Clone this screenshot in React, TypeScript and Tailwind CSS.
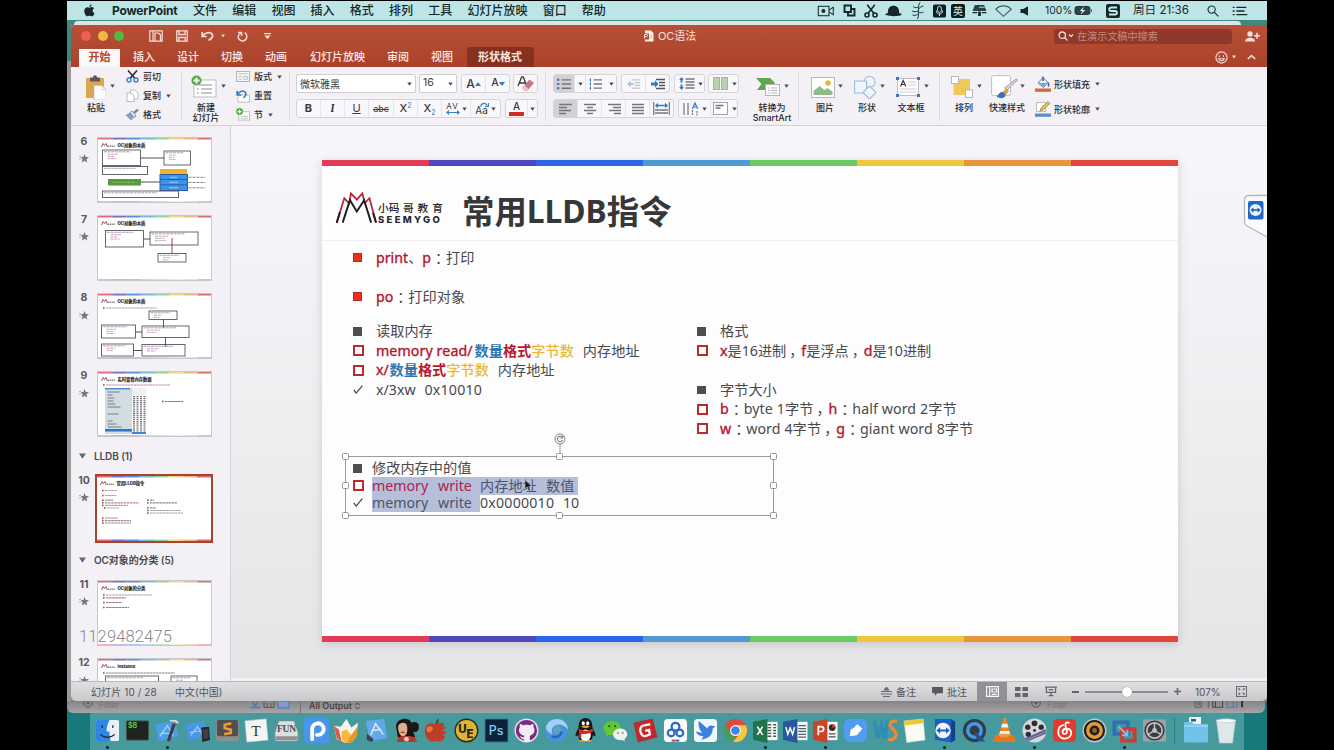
import React from "react";
import type { ReactNode } from "react";

/* ---------- small shared pieces ---------- */

function Arrow({ className = "" }: { className?: string }) {
  return (
    <svg viewBox="0 0 5 4" className={`h-1 w-[5px] shrink-0 ${className}`}>
      <path d="M0.3 0.4h4.4L2.5 3.8z" fill="#4c4a4e" />
    </svg>
  );
}

function Divider() {
  return <div className="h-[50px] w-px shrink-0 bg-[#dcdadd]" />;
}

/* ---------- menu bar ---------- */

const MENUS = ["文件", "编辑", "视图", "插入", "格式", "排列", "工具", "幻灯片放映", "窗口", "帮助"];

function MenuBar() {
  return (
    <div className="relative h-[19px] w-[1200px] shrink-0 bg-[#bde5e7] text-[12px] leading-none text-[#16282b]">
      <div className="flex h-full items-center pl-[17px]">
        <svg viewBox="0 0 12 14" className="h-[13px] w-[11px]">
          <path
            fill="#16282b"
            d="M8.3.3C8.4 1.600 7.300 3.200 5.900 3.200 5.700 1.900 7 .5 8.300.3zM6 3.900C6.700 3.900 7.500 3.200 8.700 3.300 9.800 3.400 10.600 3.900 11.100 4.600 8.700 6.100 9.100 9 11.500 9.900 10.900 11.500 9.900 13.400 8.600 13.400 7.600 13.400 7.300 12.800 6.100 12.800 4.900 12.800 4.500 13.400 3.600 13.400 2.100 13.400.3 10.300.3 7.600.3 4.900 2 3.400 3.700 3.400 4.700 3.400 5.400 3.900 6 3.900z"
          />
        </svg>
        <div className="ml-[17px] w-[81px] text-[12px] font-bold tracking-[-0.180px]">PowerPoint</div>
        <div className="flex gap-[15.2px]">
          {MENUS.map((m) => (
            <div key={m} className="whitespace-nowrap font-medium">
              {m}
            </div>
          ))}
        </div>
        <svg viewBox="0 0 20 14" className="ml-auto h-[12px] w-[18px]">
          <g fill="none" stroke="#16282b" strokeWidth="1.2">
            <rect x="1" y="1.500" width="12.500" height="11" />
            <path d="M13.500 6 18.500 2.500v9L13.500 8" />
          </g>
          <circle cx="7" cy="7" r="2.300" fill="#16282b" />
        </svg>
        <svg viewBox="0 0 13 13" className="ml-[8px] h-[13px] w-[13px]">
          <g fill="none" stroke="#16282b" strokeWidth="1.900">
            <path d="M1.500 1.500h6.500v6.500h-6.500z" />
            <path d="M5 8v3.500h6.500V5H8" />
          </g>
        </svg>
        <svg viewBox="0 0 14 14" className="ml-[8px] h-[14px] w-[14px]">
          <g fill="none" stroke="#16282b" strokeWidth="1.600">
            <circle cx="3" cy="11" r="2" />
            <circle cx="11" cy="11" r="2" />
            <path d="M4 9.500 10.800.8M10 9.500 3.200.8" />
          </g>
        </svg>
        <svg viewBox="0 0 18 12" className="ml-[7px] h-[12px] w-[17px]">
          <path d="M3 8C3 3 5 .5 9 .5S15 3 15 8l2.700 1.300C18 11 14 11.500 9 11.500S0 11 .3 9.300z" fill="#16282b" />
        </svg>
        <svg viewBox="0 0 14 18" className="ml-[9px] h-[18px] w-[14px]">
          <path
            d="M9 .5C7 3 8 5 7.500 8c0 4 .5 6-1 9M2 4.500c2 1.500 4 1.500 5.500.5M12.500 4c-2 .3-3.500 1.200-5 3M12.500 10c-2 1-3.500 1-5 0M1 9c2 .8 4 .8 6 .3M1.500 13c2 .8 4 .3 5.500-1"
            fill="none"
            stroke="#16282b"
            strokeWidth=".9"
          />
        </svg>
        <svg viewBox="0 0 14 14" className="ml-[8px] h-[14px] w-[13px]">
          <rect width="14" height="14" rx="2" fill="#0e1d20" />
          <rect x="5" y="2" width="4" height="6.500" rx="2" fill="none" stroke="#c9eeef" />
          <path d="M3.500 6.500c0 5 7 5 7 0M7 10v2.500" fill="none" stroke="#c9eeef" />
        </svg>
        <div className="ml-[5px] flex h-[14px] w-[14px] items-center justify-center rounded-[2px] bg-[#0e1d20] text-[10px] text-[#c9eeef]">
          英
        </div>
        <svg viewBox="0 0 15 14" className="ml-[7px] h-[13px] w-[15px]">
          <path d="M2.500 1h10L15 7.500H0z" fill="#2c4247" />
          <path d="M0 8.500h5v1.500H0zM10 8.500h5v1.500h-5zM6 8h3v5H6z" fill="#16282b" />
          <path d="M7 3.500h6" stroke="#bde5e7" />
        </svg>
        <svg viewBox="0 0 17 12" className="ml-[8px] h-[12px] w-[17px]">
          <path d="M.8 4.200C5-.2 12-.2 16.200 4.200L8.500 11.300z" fill="none" stroke="#3d5a5e" strokeWidth="1.100" />
        </svg>
        <svg viewBox="0 0 9 10" className="ml-[8px] h-[10px] w-[9px]">
          <path d="M.5 3h2.700L8 .3v9.400L3.200 7H.5z" fill="#16282b" />
        </svg>
        <div className="ml-[16px] w-[29px] text-[10.300px]">100%</div>
        <svg viewBox="0 0 20 10" className="h-[9px] w-[19px]">
          <rect x=".6" y=".6" width="16.500" height="8.800" rx="2" fill="#2b474b" stroke="#16282b" />
          <path d="M18.300 3v4c1.200-.4 1.200-3.600 0-4z" fill="#16282b" />
          <path d="M10.500.5 6 5.500h2.500L7 9.500l5-5H9z" fill="#d8f4f4" />
        </svg>
        <svg viewBox="0 0 14 14" className="ml-[13px] h-[14px] w-[14px]">
          <rect width="14" height="14" rx="2" fill="#16282b" />
          <path d="M11 3.500H5.500C2.500 3.500 2.500 7 5 7h4c2.500 0 2.500 3.500 0 3.500H3" fill="none" stroke="#c9eeef" strokeWidth="1.800" />
        </svg>
        <div className="ml-[13px] w-[59px] whitespace-nowrap text-[11.600px]">周日 21:36</div>
        <svg viewBox="0 0 13 13" className="ml-[15px] h-[12px] w-[12px]">
          <circle cx="5" cy="5" r="3.900" fill="none" stroke="#16282b" strokeWidth="1.200" />
          <path d="m8 8 4.300 4.300" stroke="#16282b" strokeWidth="1.400" />
        </svg>
        <svg viewBox="0 0 16 11" className="ml-[13px] mr-[19px] h-[10px] w-[16px]">
          <path d="M0 1.500h2M0 5.500h2M0 9.500h2M4 1.500h11M4 5.500h9M4 9.500h12" stroke="#16282b" strokeWidth="1.500" />
        </svg>
      </div>
    </div>
  );
}

/* ---------- title bar and tabs ---------- */

function TitleBar() {
  return (
    <div className="flex h-[22px] items-center pl-[10px]">
      <div className="flex gap-[6.500px]">
        <div className="h-[10px] w-[10px] rounded-full bg-[#ee5f55]" />
        <div className="h-[10px] w-[10px] rounded-full bg-[#f1b746]" />
        <div className="h-[10px] w-[10px] rounded-full bg-[#52b943]" />
      </div>
      <svg viewBox="0 0 14 12" className="ml-[25px] h-[12px] w-[14px]">
        <g fill="none" stroke="#f6dfd8" strokeWidth="1.200">
          <path d="M.8.8h12.400v10.400H.8zM4 .8v10.400M6 3h3.500l2 2v6H6z" />
        </g>
      </svg>
      <svg viewBox="0 0 12 12" className="ml-[13px] h-[12px] w-[12px]">
        <g fill="none" stroke="#f6dfd8" strokeWidth="1.300">
          <path d="M.8.8h10.400v10.400H.8z" />
          <path d="M3 1v3.500h6V1M2.800 11V7.500h6.400V11" />
        </g>
      </svg>
      <svg viewBox="0 0 13 10" className="ml-[13px] h-[10px] w-[13px]">
        <path d="M1.200 1v4.500h4.500M1.500 5.300C4 1.500 9 .5 11 3c1.600 2.400-.5 5-3.500 6.300" fill="none" stroke="#f6dfd8" strokeWidth="1.700" />
      </svg>
      <svg viewBox="0 0 5 4" className="ml-[7px] h-1 w-[4px]">
        <path d="M0 0h5L2.500 4z" fill="#f6cfa0" />
      </svg>
      <svg viewBox="0 0 12 12" className="ml-[12px] h-[11px] w-[11px]">
        <path d="M1 1.500h4v4M4.500 2C1 3.500.5 7 2.500 9.300c2 2.200 5.500 2 7.200-.3C11.300 6.500 11 4 8.500 1.800" fill="none" stroke="#f6dfd8" strokeWidth="1.600" />
      </svg>
      <svg viewBox="0 0 7 7" className="ml-[16px] h-[7px] w-[7px]">
        <path d="M0 .6h7" stroke="#f6dfd8" strokeWidth="1.200" />
        <path d="M.3 2.500h6.400L3.500 6.300z" fill="#f6dfd8" />
      </svg>
      <div className="ml-[372px] flex items-center">
        <svg viewBox="0 0 11 12" className="h-[12px] w-[11px]">
          <path d="M2 .5h6l2.500 2.500v8.500H2z" fill="#f6ece8" />
          <path d="M0 3.500h6v6H0z" fill="#b5492f" />
          <path d="M1.500 8.500v-4h2c1.500 0 1.500 2.200 0 2.200h-2" fill="none" stroke="#f6ece8" />
          <path d="M6.500 5.500h2.500M6.500 7.500h2.500" stroke="#c8a79e" strokeWidth=".8" />
        </svg>
        <div className="ml-[4px] pt-px text-[11px] leading-none tracking-[-0.100px] text-[#f6e2dc]">OC语法</div>
      </div>
      <div className="ml-auto flex h-[15px] w-[178px] items-center rounded-[3px] bg-[#90392a] pl-[4px]">
        <svg viewBox="0 0 16 10" className="h-[10px] w-[16px]">
          <circle cx="4.300" cy="4.200" r="3.200" fill="none" stroke="#f0d5cd" strokeWidth="1.300" />
          <path d="m6.500 6.500 3 3M11 3.500l2 2 2-2" fill="none" stroke="#f0d5cd" strokeWidth="1.300" />
        </svg>
        <div className="ml-[3px] whitespace-nowrap text-[10.100px] leading-none text-[#c98a7c]">在演示文稿中搜索</div>
      </div>
      <svg viewBox="0 0 15 11" className="ml-[13px] mr-[7px] h-[11px] w-[15px]">
        <circle cx="5" cy="3" r="2.700" fill="#f6dfd8" />
        <path d="M0 10.500c0-5 10-5 10 0z" fill="#f6dfd8" />
        <path d="M9 4.800h6M12 1.800v6" stroke="#f6dfd8" strokeWidth="1.500" />
      </svg>
    </div>
  );
}

function Tabs() {
  return (
    <div className="flex h-[20px] items-center text-[11px] font-medium leading-none text-[#fbe9e4]">
      <div className="ml-[8px] flex h-[18px] w-[41px] items-center justify-center self-end bg-[#fbf8f9] pb-px font-bold text-[#b7472a]">
        开始
      </div>
      <div className="ml-[13px] w-[44px]">插入</div>
      <div className="w-[44px]">设计</div>
      <div className="w-[44px]">切换</div>
      <div className="w-[45px]">动画</div>
      <div className="w-[77px]">幻灯片放映</div>
      <div className="w-[44px]">审阅</div>
      <div className="w-[36px]">视图</div>
      <div className="flex h-[20px] w-[67px] items-center justify-center rounded-t-[3px] bg-[#87301f] pr-px font-bold">形状格式</div>
      <svg viewBox="0 0 14 14" className="ml-auto h-[13px] w-[13px]">
        <circle cx="7" cy="7" r="6" fill="none" stroke="#f6dfd8" strokeWidth="1.200" />
        <path d="M4.800 4.500v2M9.200 4.500v2M3.800 8.300c1.500 3 5 3 6.400 0z" fill="none" stroke="#f6dfd8" strokeWidth="1.100" />
      </svg>
      <svg viewBox="0 0 5 4" className="ml-[4px] h-1 w-[4px]">
        <path d="M0 0h5L2.500 4z" fill="#f6dfd8" />
      </svg>
      <svg viewBox="0 0 9 6" className="ml-[11px] mr-[11px] h-[6px] w-[9px]">
        <path d="m.8 5 3.700-3.500L8.200 5" fill="none" stroke="#f6dfd8" strokeWidth="1.600" />
      </svg>
    </div>
  );
}

/* ---------- ribbon ---------- */

function BigButton({ width, icon, lines }: { width: string; icon: ReactNode; lines: string[] }) {
  return (
    <div className={`flex h-[58px] shrink-0 flex-col items-center pt-[6px] ${width}`}>
      <div className="flex h-[28px] items-center justify-center">{icon}</div>
      <div className="mt-[2px] flex flex-col items-center text-[9px] font-medium leading-[10px] text-[#2b292d]">
        {lines.map((l) => (
          <div key={l} className="whitespace-nowrap">
            {l}
          </div>
        ))}
      </div>
    </div>
  );
}

function BigArrow({ className = "" }: { className?: string }) {
  return (
    <div className={`flex h-[58px] w-[5px] shrink-0 flex-col pt-[17px] ${className}`}>
      <Arrow />
    </div>
  );
}

function SmallRow({ icon, text, arrow = false }: { icon: ReactNode; text: string; arrow?: boolean }) {
  return (
    <div className="flex h-[19px] items-center">
      <div className="flex w-[14px] items-center justify-center">{icon}</div>
      <div className="ml-[4px] whitespace-nowrap text-[9px] font-medium leading-none text-[#2b292d]">{text}</div>
      {arrow && <Arrow className="ml-[5px]" />}
    </div>
  );
}

const BOX = "flex h-[19px] shrink-0 items-center overflow-hidden rounded-[3px] border border-[#d6d4d8] bg-[#f8f7f9]";

function Lines({ d, color = "#77757a", className = "h-[12px] w-[14px]" }: { d: string; color?: string; className?: string }) {
  return (
    <svg viewBox="0 0 14 12" className={className}>
      <path d={d} stroke={color} strokeWidth="1.300" fill="none" />
    </svg>
  );
}

function Cell({ children, w, on = false }: { children: ReactNode; w: string; on?: boolean }) {
  return (
    <div
      className={`flex h-full shrink-0 items-center justify-center border-r border-[#e6e4e8] last:border-r-0 ${w} ${
        on ? "bg-[#d2d0d4]" : ""
      }`}
    >
      {children}
    </div>
  );
}

function FontGroup() {
  return (
    <div className="flex w-[242px] shrink-0 flex-col gap-[6px] pt-[7px] text-[#3a383d]">
      <div className="flex">
        <div className="flex h-[19px] w-[120px] items-center justify-between rounded-[2px] border border-[#cfcdd1] bg-white pl-[3px] pr-[3px] text-[10px] leading-none">
          微软雅黑 <Arrow />
        </div>
        <div className="ml-[3px] flex h-[19px] w-[38px] items-center justify-between rounded-[2px] border border-[#cfcdd1] bg-white pl-[3px] pr-[3px] text-[10.500px] leading-none">
          16 <Arrow />
        </div>
        <div className={`${BOX} ml-[4px] w-[49px]`}>
          <Cell w="w-[24px]">
            <span className="text-[12px] font-medium leading-none">A</span>
            <svg viewBox="0 0 6 4" className="h-1 w-[6px]">
              <path d="M0 4h6L3 0z" fill="#3f78b8" />
            </svg>
          </Cell>
          <Cell w="w-[24px]">
            <span className="text-[10.500px] font-medium leading-none">A</span>
            <svg viewBox="0 0 6 4" className="h-1 w-[6px]">
              <path d="M0 0h6L3 4z" fill="#3f78b8" />
            </svg>
          </Cell>
        </div>
        <div className={`${BOX} ml-[3px] w-[25px] justify-center`}>
          <svg viewBox="0 0 18 16" className="h-[16px] w-[18px]">
            <path d="M1 10 4.700 1h1.600L9 8M2.500 7H8" stroke="#3a383d" strokeWidth="1.300" fill="none" />
            <path d="m5 11.500 7.500-8L17 7l-7 8H7.500z" fill="#c87588" />
            <path d="m5 11.500 2.300-2.400 4.200 4L10 15H7.500z" fill="#e9c3cc" />
          </svg>
        </div>
      </div>
      <div className="flex text-[11px] leading-none">
        <div className={`${BOX} w-[205px]`}>
          <Cell w="w-[24px]">
            <b>B</b>
          </Cell>
          <Cell w="w-[24px]">
            <i className="font-serif font-bold">I</i>
          </Cell>
          <Cell w="w-[24px]">
            <span className="underline">U</span>
          </Cell>
          <Cell w="w-[25px]">
            <span className="text-[9px] line-through">abc</span>
          </Cell>
          <Cell w="w-[24px]">
            <span className="font-medium">X</span>
            <span className="mb-[7px] text-[7px] text-[#2f73b9]">2</span>
          </Cell>
          <Cell w="w-[24px]">
            <span className="font-medium">X</span>
            <span className="mt-[7px] text-[7px] text-[#2f73b9]">2</span>
          </Cell>
          <Cell w="w-[29px]">
            <div className="mr-[2px] flex flex-col items-center">
              <span className="text-[8px] leading-[8px] tracking-[1px]">AV</span>
              <svg viewBox="0 0 14 5" className="h-[5px] w-[14px]">
                <path d="M0 2.500 3 0v2h8V0l3 2.500L11 5V3H3v2z" fill="#3a80c6" />
              </svg>
            </div>
            <Arrow />
          </Cell>
          <Cell w="w-[29px]">
            <span className="relative mr-[3px] mt-[2px] text-[10px]">
              Aa
              <svg viewBox="0 0 9 5" className="absolute -top-[3px] left-[5px] h-[5px] w-[9px]">
                <path d="M.5 4.500C1.500 1 5 .5 7 3M8.500 1v3.500H5" fill="none" stroke="#3a80c6" strokeWidth="1.300" />
              </svg>
            </span>
            <Arrow />
          </Cell>
        </div>
        <div className={`${BOX} ml-[4px] w-[33px]`}>
          <Cell w="w-[22px]">
            <div className="flex flex-col items-center">
              <span className="text-[10px] font-medium leading-[11px]">A</span>
              <span className="h-[4px] w-[15px] bg-[#d32a22]" />
            </div>
          </Cell>
          <Arrow className="ml-[2px]" />
        </div>
      </div>
    </div>
  );
}

function ParagraphGroup() {
  return (
    <div className="flex w-[185px] shrink-0 flex-col gap-[6px] pt-[7px]">
      <div className="flex">
        <div className={`${BOX} w-[64px]`}>
          <Cell w="w-[21px]" on>
            <svg viewBox="0 0 16 12" className="h-[12px] w-[15px]">
              <path d="M0 1.500h2.500M0 6h2.500M0 10.500h2.500" stroke="#3a76b8" strokeWidth="2.200" />
              <path d="M5 1.500h10M5 6h10M5 10.500h10" stroke="#77757a" strokeWidth="1.400" />
            </svg>
          </Cell>
          <Cell w="w-[11px]">
            <Arrow />
          </Cell>
          <div className="flex w-[20px] justify-center">
            <svg viewBox="0 0 15 12" className="h-[12px] w-[14px]">
              <path d="M1.500.2v3M1.500 4.500v3M1.500 9v3" stroke="#3a76b8" strokeWidth="1.300" />
              <path d="M5 1.500h9M5 6h9M5 10.500h9" stroke="#77757a" strokeWidth="1.400" />
            </svg>
          </div>
          <Arrow className="ml-[3px]" />
        </div>
        <div className={`${BOX} ml-[4px] w-[49px]`}>
          <Cell w="w-[24px]">
            <svg viewBox="0 0 15 12" className="h-[12px] w-[14px] opacity-40">
              <path d="M5 1.500h9M8 4.500h6M8 7.500h6M5 10.500h9" stroke="#77757a" strokeWidth="1.400" />
              <path d="M0 6 4 2.500V5h3v2H4v2.500z" fill="#2f78cc" />
            </svg>
          </Cell>
          <Cell w="w-[24px]">
            <svg viewBox="0 0 15 12" className="h-[12px] w-[15px]">
              <path d="M5 1.500h9M8 4.500h6M8 7.500h6M5 10.500h9" stroke="#55535a" strokeWidth="1.400" />
              <path d="M7.500 6 4 2.300v2.200H0v3h4v2.200z" fill="#2f78cc" />
            </svg>
          </Cell>
        </div>
        <div className={`${BOX} ml-[4px] w-[31px] pl-[4px]`}>
          <svg viewBox="0 0 16 13" className="h-[13px] w-[16px]">
            <path d="m2.500 0 2.300 3H3.500v2.500h-2V3H.2zM2.500 13l2.300-3H3.500V7.500h-2V10H.2z" fill="#2f78cc" />
            <path d="M6.500 2h9M6.500 5h9M6.500 8h9M6.500 11h9" stroke="#77757a" strokeWidth="1.400" />
          </svg>
          <Arrow className="ml-[3px]" />
        </div>
        <div className={`${BOX} ml-[3px] w-[31px] pl-[4px]`}>
          <svg viewBox="0 0 15 13" className="h-[13px] w-[15px]">
            <rect x=".5" y=".5" width="6" height="12" fill="#b9d3b0" stroke="#9fb89a" />
            <rect x="8.500" y=".5" width="6" height="12" fill="#b9d3b0" stroke="#9fb89a" />
          </svg>
          <Arrow className="ml-[4px]" />
        </div>
      </div>
      <div className="flex">
        <div className={`${BOX} w-[121px]`}>
          <Cell w="w-[24px]" on>
            <Lines d="M0 1.500h13M0 4.500h8M0 7.500h12M0 10.500h7" />
          </Cell>
          <Cell w="w-[24px]">
            <Lines d="M1 1.500h12M4 4.500h6M1 7.500h12M4 10.500h6" />
          </Cell>
          <Cell w="w-[24px]">
            <Lines d="M1 1.500h13M6 4.500h8M2 7.500h12M7 10.500h7" />
          </Cell>
          <Cell w="w-[24px]">
            <Lines d="M1 1.500h12M1 4.500h12M1 7.500h12M1 10.500h12" />
          </Cell>
          <Cell w="w-[23px]">
            <svg viewBox="0 0 17 13" className="h-[13px] w-[17px]">
              <path d="M.7 0v13M16.300 0v13" stroke="#77757a" strokeWidth="1.200" />
              <path d="M2 8h13M2 11h13" stroke="#77757a" strokeWidth="1.300" />
              <path d="m2 3.500 3-2.700v2h7v-2l3 2.700-3 2.700v-2H5v2z" fill="#2f78cc" />
            </svg>
          </Cell>
        </div>
        <div className={`${BOX} ml-[4px] w-[60px]`}>
          <Cell w="w-[32px]">
            <svg viewBox="0 0 17 14" className="h-[14px] w-[17px]">
              <path d="M1 1v12M5 1v12" stroke="#77757a" strokeWidth="1.200" />
              <path d="M9.500 8v5.500M14 9v4.500" stroke="#77757a" strokeWidth="1.200" strokeDasharray="2 .8" />
              <path d="m9.300 7 2.700-6 2.700 6M10.300 5h3.600" stroke="#2f78cc" strokeWidth="1.200" fill="none" />
            </svg>
            <Arrow className="ml-[2px]" />
          </Cell>
          <svg viewBox="0 0 15 13" className="ml-[2px] h-[13px] w-[15px]">
            <rect x=".5" y=".5" width="14" height="12" fill="#fff" stroke="#a3a1a6" />
            <path d="M2.500 3.500h8M2.500 6h5" stroke="#77757a" strokeWidth="1.300" />
          </svg>
          <Arrow className="ml-[4px]" />
        </div>
      </div>
    </div>
  );
}

function Ribbon() {
  return (
    <div className="flex h-[59px] items-start border-b border-[#d3d1d5] bg-[#f3f1f5] pt-0">
      <div className="ml-[11px] flex">
        <BigButton
          width="w-[28px]"
          lines={["粘贴"]}
          icon={
            <svg viewBox="0 0 20 25" className="h-[25px] w-[20px]">
              <rect x="0" y="3" width="18" height="20" rx="1" fill="#dca552" />
              <path d="M4 2.500h3c0-3 4-3 4 0h3v4H4z" fill="#5b5960" />
              <path d="M8 10.500h8l4 4V25H8z" fill="#fff" stroke="#b9b7bc" strokeWidth=".7" />
              <path d="M16 10.500v4h4" fill="none" stroke="#b9b7bc" strokeWidth=".7" />
            </svg>
          }
        />
        <BigArrow />
        <div className="ml-[10px] flex w-[55px] flex-col">
          <SmallRow
            text="剪切"
            icon={
              <svg viewBox="0 0 13 13" className="h-[13px] w-[13px]">
                <path d="m2 .5 7 8M11 .5l-7 8" stroke="#2d2b30" strokeWidth="1.600" />
                <g fill="none" stroke="#3c7fc4" strokeWidth="1.400">
                  <circle cx="3" cy="10" r="2" />
                  <circle cx="10" cy="10" r="2" />
                </g>
              </svg>
            }
          />
          <SmallRow
            text="复制"
            arrow
            icon={
              <svg viewBox="0 0 13 13" className="h-[13px] w-[13px]">
                <g fill="#fff" stroke="#b4b2b7" strokeWidth=".9">
                  <path d="M4.500 1H9l3 3v6H4.500z" />
                  <path d="M1 4h4l3 3v5.500H1z" />
                </g>
              </svg>
            }
          />
          <SmallRow
            text="格式"
            icon={
              <svg viewBox="0 0 14 12" className="h-[12px] w-[14px]">
                <path d="m.5 6 4.500-2.500 4 5L6 11.500z" fill="#7ca3cc" />
                <path d="m5 3.500 2-1.500 4 5-2 1.500z" fill="#e7e6e9" stroke="#77757a" strokeWidth=".7" />
                <path d="M9 4 13 .5" stroke="#8d8b90" strokeWidth="2.500" />
              </svg>
            }
          />
        </div>
        <div className="ml-[1px] pt-[4px]">
          <Divider />
        </div>
      </div>
      <div className="ml-[10px] flex">
        <BigButton
          width="w-[28px]"
          lines={["新建", "幻灯片"]}
          icon={
            <svg viewBox="0 0 26 24" className="mr-[4px] h-[24px] w-[26px]">
              <rect x="3" y="5" width="22" height="17" fill="#fff" stroke="#bebcc1" />
              <path d="M8 10h13M10 14h11M10 18h11" stroke="#c7c5ca" strokeWidth="2" />
              <path d="M6 14h1.500M6 18h1.500" stroke="#a9a7ac" strokeWidth="1.500" />
              <circle cx="5.500" cy="5.500" r="5" fill="#55a946" />
              <path d="M5.500 2.500v6M2.500 5.500h6" stroke="#fff" strokeWidth="1.800" />
            </svg>
          }
        />
        <BigArrow className="ml-px" />
        <div className="ml-[10px] flex w-[53px] flex-col">
          <SmallRow
            text="版式"
            arrow
            icon={
              <svg viewBox="0 0 15 12" className="h-[11px] w-[14px]">
                <rect x=".5" y=".5" width="14" height="11" fill="#f5f4f6" stroke="#b1afb4" />
                <path d="M2.500 3h10M2.500 6h4M2.500 9h4M8.500 6h4v3h-4z" stroke="#c0bec3" fill="none" />
              </svg>
            }
          />
          <SmallRow
            text="重置"
            icon={
              <svg viewBox="0 0 15 14" className="h-[14px] w-[14px]">
                <path d="M4 6h10.500v7.500H2V9z" fill="#fff" stroke="#bebcc1" />
                <path d="M1.200 1.500V6h4.500M1.500 5.500C4 1.500 8 .5 10 3c1.500 2.500 0 4.500-2 6" fill="none" stroke="#3479c0" strokeWidth="1.700" />
              </svg>
            }
          />
          <SmallRow
            text="节"
            arrow
            icon={
              <svg viewBox="0 0 15 14" className="h-[13px] w-[14px]">
                <rect x="3" y="4" width="11.500" height="9" fill="#fff" stroke="#bebcc1" />
                <path d="M5 9h8M5 11h8" stroke="#bebcc1" />
                <circle cx="3.800" cy="3.800" r="3.700" fill="#55a946" />
                <path d="M3.800 1.600V6M1.600 3.800H6" stroke="#fff" strokeWidth="1.300" />
              </svg>
            }
          />
        </div>
        <div className="pt-[4px]">
          <Divider />
        </div>
      </div>
      <div className="ml-[6px] flex">
        <FontGroup />
        <div className="ml-[7px] pt-[4px]">
          <Divider />
        </div>
      </div>
      <div className="ml-[7px] flex">
        <ParagraphGroup />
        <BigButton
          width="ml-[12px] w-[44px]"
          lines={["转换为", "SmartArt"]}
          icon={
            <svg viewBox="0 0 25 20" className="mr-[8px] h-[20px] w-[25px]">
              <path d="M0 1h14l5 5-5 7H1l4.500-6z" fill="#5fa74f" />
              <rect x="9.500" y="7.500" width="14" height="11" fill="#fdfdfd" stroke="#b4b2b7" />
              <path d="M12 11h1.500M15 11h6M12 13.500h1.500M15 13.500h6M12 16h1.500M15 16h6" stroke="#b4b2b7" />
            </svg>
          }
        />
        <BigArrow className="-ml-[10px]" />
        <div className="ml-[9px] pt-[4px]">
          <Divider />
        </div>
      </div>
      <div className="flex">
        <BigButton
          width="ml-[11px] w-[30px]"
          lines={["图片"]}
          icon={
            <svg viewBox="0 0 24 21" className="mr-[4px] h-[21px] w-[24px]">
              <rect x=".5" y=".5" width="23" height="20" fill="#fff" stroke="#b9b7bc" />
              <path d="M2.500 18v-4l6-5 5 4 3-2 5 3.500V18z" fill="#92bb8c" />
              <circle cx="17" cy="6" r="2.700" fill="#e6b93e" />
            </svg>
          }
        />
        <BigArrow className="-ml-[2px]" />
        <BigButton
          width="ml-[9px] w-[30px]"
          lines={["形状"]}
          icon={
            <svg viewBox="0 0 23 23" className="mr-[4px] h-[23px] w-[23px]">
              <g fill="#f0f6fb" stroke="#9dbfdb" strokeWidth="1.100">
                <circle cx="15.500" cy="6" r="5.500" />
                <rect x=".6" y="5" width="12" height="12" />
                <path d="m15.500 10 6.500 6.500-6.500 6.500L9 16.500z" />
              </g>
            </svg>
          }
        />
        <BigArrow className="-ml-[2px]" />
        <BigButton
          width="ml-[9px] w-[34px]"
          lines={["文本框"]}
          icon={
            <svg viewBox="0 0 24 20" className="mr-[6px] h-[20px] w-[24px]">
              <rect x="1.500" y="1.500" width="21" height="17" fill="#fdfdfd" stroke="#bebcc1" />
              <path d="m4.500 9.500 2.700-6 2.700 6M5.500 7.500H9" stroke="#3a383d" strokeWidth="1.200" fill="none" />
              <path d="M12 5h8M12 8h8M4 12h16M4 15h16" stroke="#cfcdd1" />
              <path d="M0 0h3v3H0zM21 0h3v3h-3zM0 17h3v3H0zM21 17h3v3h-3z" fill="#3a78bd" />
            </svg>
          }
        />
        <BigArrow className="-ml-[4px]" />
        <div className="ml-[10px] pt-[4px]">
          <Divider />
        </div>
      </div>
      <div className="flex">
        <BigButton
          width="ml-[9px] w-[30px]"
          lines={["排列"]}
          icon={
            <svg viewBox="0 0 22 22" className="mr-[5px] h-[22px] w-[22px]">
              <rect x="2.500" y="3" width="16.500" height="16" fill="#f0c75a" />
              <rect x=".5" y=".5" width="7" height="7" fill="#fff" stroke="#b9b7bc" />
              <rect x="14.500" y="14" width="7" height="7.500" fill="#fff" stroke="#b9b7bc" />
            </svg>
          }
        />
        <BigArrow className="-ml-[2px]" />
        <BigButton
          width="ml-[6px] w-[38px]"
          lines={["快速样式"]}
          icon={
            <svg viewBox="0 0 28 24" className="mr-[5px] h-[24px] w-[28px]">
              <rect x=".6" y=".6" width="19" height="20" rx="2" fill="#fff" stroke="#bebcc1" />
              <path d="M26.500 5 16 15l-2.500-2L25 4z" fill="#d6d4d8" stroke="#8f8d92" strokeWidth=".8" />
              <path d="m15.500 13.500 2.500 2.500-3 4-5-2z" fill="#dca04a" />
              <path d="M5.500 21c2-.5 2.500-3.500 5-4 2.500 0 5 2.500 3.500 4.500-2 2.500-6.500 2-8.500-.5z" fill="#3670b6" />
            </svg>
          }
        />
        <BigArrow className="-ml-[6px]" />
        <div className="ml-[10px] flex flex-col pt-[7px]">
          <div className="flex h-[20px] items-center">
            <svg viewBox="0 0 16 16" className="h-[16px] w-[16px]">
              <path d="M0 12.500h16v3.300H0z" fill="#d16a3a" />
              <path d="m3 7 5-5.500 5 5-4.500 5z" fill="#e9eef4" stroke="#5e7d9f" />
              <path d="M8 5V.5M12.500 6.500c1.500 1 1.500 3 .5 4" stroke="#2f6aab" strokeWidth="1.500" fill="none" />
              <path d="M3 7h9l-3.500 4z" fill="#7fa6cd" />
            </svg>
            <div className="ml-[3px] w-[41px] whitespace-nowrap text-[9px] font-medium leading-none text-[#2b292d]">形状填充</div>
            <Arrow />
          </div>
          <div className="mt-[5px] flex h-[20px] items-center">
            <svg viewBox="0 0 16 16" className="h-[16px] w-[16px]">
              <path d="M0 12.500h16v3.300H0z" fill="#5b8ec9" />
              <path d="M1.500 1.500h9v9h-9z" fill="#fff" stroke="#bebcc1" />
              <path d="m5 10 1-3 7-6.500 2 2L8 9z" fill="#e8c14c" stroke="#7b6c3e" strokeWidth=".6" />
            </svg>
            <div className="ml-[3px] w-[41px] whitespace-nowrap text-[9px] font-medium leading-none text-[#2b292d]">形状轮廓</div>
            <Arrow />
          </div>
        </div>
      </div>
    </div>
  );
}

/* ---------- slide thumbnails ---------- */

const RAINBOW = ["#dd6f80", "#7c6fbf", "#5c8fe0", "#7db9dd", "#95d694", "#ecdc85", "#ebbb85", "#d4706c"];

function ThumbFrame({ title, children }: { title: string; children?: ReactNode }) {
  return (
    <svg viewBox="0 0 114 65" className="h-[65px] w-[114px]">
      <rect width="114" height="65" fill="#fff" />
      {RAINBOW.map((c, i) => (
        <rect key={c} x={i * 14.25} y="0" width="14.250" height="1.500" fill={c} />
      ))}
      {RAINBOW.map((c, i) => (
        <rect key={c} x={i * 14.25} y="63.500" width="14.250" height="1.500" fill={c} />
      ))}
      <path d="M3.500 9 5 5.500l1.500 2 1.500-2L9.500 9" fill="none" stroke="#7c2430" strokeWidth=".8" />
      <path d="M9.500 8.300h8" stroke="#8d8b90" strokeWidth="1.500" strokeDasharray="1.500 .5" />
      <text x="19.500" y="9" fontSize="4.250" fontWeight="700" fill="#2f2d32" stroke="#2f2d32" strokeWidth=".15">
        {title}
      </text>
      {children}
    </svg>
  );
}

function Frame({ x, y, w, h }: { x: number; y: number; w: number; h: number }) {
  return (
    <g>
      <rect x={x} y={y} width={w} height={h} fill="#fff" stroke="#59575c" strokeWidth=".9" />
      <path d={`M${x + 1.5} ${y + 1.8}h${w * 0.7}`} stroke="#a592b4" strokeWidth=".9" strokeDasharray="3 .7" />
      {h > 8 && (
        <path
          d={`M${x + 5} ${y + 4.2}h${w * 0.28}M${x + 5} ${y + 6.4}h${w * 0.2}${h > 12 ? `M${x + 5} ${y + 8.6}h${w * 0.24}` : ""}`}
          stroke="#c79ab5"
          strokeWidth=".9"
          strokeDasharray="3 .7"
        />
      )}
    </g>
  );
}

function Bullets({ rows }: { rows: [number, number, number, string][] }) {
  return (
    <g>
      {rows.map(([x, y, w, c], i) => (
        <g key={i}>
          <rect x={x} y={y - 0.8} width="1.600" height="1.600" fill="#8d5560" />
          <path d={`M${x + 3} ${y}h${w}`} stroke={c} strokeWidth="1.200" strokeDasharray="2.600 .5" />
        </g>
      ))}
    </g>
  );
}

function Thumb6() {
  return (
    <ThumbFrame title="OC对象的本质">
      <Frame x={4.5} y={12} w={38} h={15.5} />
      <Frame x={66} y={13} w={26.5} h={14} />
      <path d="M42.500 20H66M42.500 44H62" stroke="#3d3b40" strokeWidth=".9" />
      <Frame x={4.5} y={28.5} w={45} h={8} />
      <rect x="10" y="41" width="33" height="6.500" fill="#57993b" />
      <path d="M15 44.300h22" stroke="#8cc070" strokeWidth="1" strokeDasharray="3 .7" />
      <rect x="62" y="31" width="27" height="5" fill="#f0b22d" />
      <rect x="62" y="36.500" width="27.500" height="16" fill="#3c94ea" stroke="#2a5ba0" />
      <path d="M62 41.500h27.500M62 46.800h27.500" stroke="#2a5ba0" strokeWidth=".9" />
      <path d="M72 39.300h7M71 44.300h9M71 49.800h9" stroke="#a9d1f7" strokeWidth=".9" />
      <path d="M90.500 39.300h17M90.500 44.500h17M90.500 49.800h17" stroke="#77757a" strokeWidth=".9" strokeDasharray="3 1" />
      <Frame x={4.5} y={53} w={76} h={6.5} />
    </ThumbFrame>
  );
}

function Thumb7() {
  return (
    <ThumbFrame title="OC对象的本质">
      <Frame x={7.5} y={14.5} w={38} h={16.5} />
      <Frame x={52} y={16} w={48} h={13} />
      <Frame x={60} y={37.5} w={28} h={8.5} />
      <path d="M45.500 23H52" stroke="#3d3b40" strokeWidth=".9" />
      <path d="M74 22v15.500" stroke="#7f3440" strokeWidth=".9" />
    </ThumbFrame>
  );
}

function Thumb8() {
  return (
    <ThumbFrame title="OC对象的本质">
      <Bullets rows={[[5, 14, 51, "#a5a3a8"]]} />
      <Frame x={51} y={17} w={28} h={8.5} />
      <Frame x={3.5} y={31} w={34} h={13} />
      <Frame x={44} y={32} w={47} h={11.5} />
      <Frame x={3.5} y={50} w={32} h={12} />
      <Frame x={44} y={50.5} w={43} h={11.5} />
      <path d="M37.500 38H44M35.500 56.500H44" stroke="#3d3b40" strokeWidth=".9" />
      <path d="M65.500 25.500v8M67.500 43.500v9" stroke="#7f3440" strokeWidth=".9" />
    </ThumbFrame>
  );
}

function Thumb9() {
  return (
    <ThumbFrame title="实时查看内存数据">
      <Bullets
        rows={[
          [5, 13, 64, "#c48b95"],
          [64, 29.5, 18, "#77757a"],
        ]}
      />
      <rect x="7" y="16" width="27" height="46" fill="#d3dde0" />
      <path d="M7 16.700h25" stroke="#4b88cd" strokeWidth="1.500" />
      <path
        d="M9.500 20h12M9.500 23h5M9.500 26h7M9.500 29h6M9.500 32h8M9.500 35h13M9.500 42h11M9.500 49h5M9.500 52h9M9.500 55h14"
        stroke="#69828a"
        strokeWidth="1"
      />
      <rect x="7" y="57" width="27" height="2.500" fill="#2e74ca" />
      <rect x="34" y="16" width="14" height="8" fill="#eef1f2" />
      <path d="M36 24v37M39.500 24v37M43 24v37M46.500 24v37" stroke="#7a787d" strokeWidth="2" strokeDasharray="1.200 .7" />
      <path d="M34 61h14" stroke="#3f83d1" strokeWidth="2" />
    </ThumbFrame>
  );
}

function Thumb10() {
  return (
    <ThumbFrame title="常用LLDB指令">
      <Bullets
        rows={[
          [5, 14.5, 12, "#c99aa2"],
          [5, 19.5, 11, "#a3a1a6"],
          [5, 24.2, 8, "#8d8b90"],
          [5, 26.8, 34, "#b98aa0"],
          [5, 29.4, 23, "#8fa6c9"],
          [7, 32, 12, "#a3a1a6"],
          [50, 24.2, 4, "#8d8b90"],
          [50, 26.8, 27, "#8d8b90"],
          [50, 31.8, 6, "#8d8b90"],
          [50, 34.5, 31, "#a3a1a6"],
          [50, 37, 33, "#a3a1a6"],
          [5, 42, 13, "#8d8b90"],
          [5, 44.6, 26, "#a58a94"],
          [5, 47, 26, "#8d8b90"],
        ]}
      />
    </ThumbFrame>
  );
}

function Thumb11() {
  return (
    <ThumbFrame title="OC对象的分类">
      <Bullets
        rows={[
          [5, 14, 46, "#a3a1a6"],
          [5, 16.8, 20, "#b5818b"],
          [5, 21.5, 16, "#a8707b"],
          [5, 26.5, 23, "#a8707b"],
        ]}
      />
    </ThumbFrame>
  );
}

function Thumb12() {
  return (
    <ThumbFrame title="instance">
      <Bullets rows={[[5, 14, 69, "#8f7f85"]]} />
      <Frame x={7.5} y={17} w={53} h={6} />
      <Frame x={73} y={17} w={26} h={12} />
    </ThumbFrame>
  );
}

function ThumbRow({ n, children, selected = false }: { n: number; children: ReactNode; selected?: boolean }) {
  return (
    <div className="flex h-[78.330px] shrink-0">
      <div className="flex w-[26px] flex-col items-center text-[10.500px] font-bold leading-none text-[#5b595e]">
        <div className="w-[24px] text-center">{n}</div>
        <svg viewBox="0 0 10 9" className="mt-[7px] h-[9px] w-[10px]">
          <path d="m5.500 0 1.200 3 3.300.2-2.600 2 .9 3.300-2.800-1.800L2.800 8.500l.8-3.300L1.500 3.200l2.900-.2z" fill="#77757a" />
          <path d="M0 2.500h2M0 5h2" stroke="#a3a1a6" strokeWidth=".8" />
        </svg>
      </div>
      <div
        className={
          selected
            ? "-mt-[2px] -ml-[2px] h-[69px] w-[118px] overflow-hidden border-2 border-[#a9432e]"
            : "h-[66px] w-[115px] overflow-hidden border-[0.5px] border-[#c9c7cc]"
        }
      >
        {children}
      </div>
    </div>
  );
}

function SectionRow({ title }: { title: string }) {
  return (
    <div className="flex h-[25.800px] shrink-0 items-start pl-[8px] text-[10px] font-semibold leading-[12px] text-[#4d4b50]">
      <svg viewBox="0 0 8 6" className="mt-[3px] h-[6px] w-[7px]">
        <path d="M0 0h8L4 6z" fill="#6a686d" />
      </svg>
      <div className="ml-[8px] whitespace-nowrap tracking-[-0.100px]">{title}</div>
    </div>
  );
}

function ThumbPane() {
  return (
    <div className="relative flex w-[160px] shrink-0 flex-col overflow-hidden border-r border-[#d4d2d6] bg-[#f3f1f6] pt-[10.500px]">
      <ThumbRow n={6}>
        <Thumb6 />
      </ThumbRow>
      <ThumbRow n={7}>
        <Thumb7 />
      </ThumbRow>
      <ThumbRow n={8}>
        <Thumb8 />
      </ThumbRow>
      <ThumbRow n={9}>
        <Thumb9 />
      </ThumbRow>
      <SectionRow title="LLDB (1)" />
      <ThumbRow n={10} selected>
        <Thumb10 />
      </ThumbRow>
      <SectionRow title="OC对象的分类 (5)" />
      <ThumbRow n={11}>
        <Thumb11 />
      </ThumbRow>
      <ThumbRow n={12}>
        <Thumb12 />
      </ThumbRow>
      <div className="absolute left-[8px] top-[503px] font-['Roboto','Liberation_Sans',sans-serif] text-[16.500px] font-light leading-none tracking-[0.150px] text-[#8a888d]">
        1129482475
      </div>
    </div>
  );
}

/* ---------- slide ---------- */

function Stripe() {
  return (
    <div className="flex h-[5.500px] shrink-0">
      <div className="flex-1 bg-[#e33b55]" />
      <div className="flex-1 bg-[#4d49bd]" />
      <div className="flex-1 bg-[#2c66e6]" />
      <div className="flex-1 bg-[#4c9bd4]" />
      <div className="flex-1 bg-[#6bcb63]" />
      <div className="flex-1 bg-[#eec640]" />
      <div className="flex-1 bg-[#e9933b]" />
      <div className="flex-1 bg-[#e1463c]" />
    </div>
  );
}

function Bullet({ kind }: { kind: "red" | "gray" | "hollow" | "check" }) {
  return (
    <div className="flex w-[23px] shrink-0 items-center">
      {kind === "red" && <div className="h-[9px] w-[9px] border border-[#b9281c] bg-[#e8321f]" />}
      {kind === "gray" && <div className="h-[8.500px] w-[9px] bg-[#4e4e4e]" />}
      {kind === "hollow" && <div className="h-[11px] w-[11px] border-[2.500px] border-[#bd2a2e] bg-white" />}
      {kind === "check" && (
        <svg viewBox="0 0 11 10" className="mb-px h-[9px] w-[10px]">
          <path d="M.8 5.500 3.500 9 10.300.8" fill="none" stroke="#4a4a4a" strokeWidth="1.400" />
        </svg>
      )}
    </div>
  );
}

function Line({ kind, children }: { kind: "red" | "gray" | "hollow" | "check"; children: ReactNode }) {
  return (
    <div className="flex h-[19.500px] shrink-0 items-center whitespace-pre">
      <Bullet kind={kind} />
      {children}
    </div>
  );
}

function R({ children, w = "" }: { children: ReactNode; w?: string }) {
  return <span className={`inline-block text-[#b5142c] [-webkit-text-stroke:0.350px_#b5142c] ${w}`}>{children}</span>;
}

function Colon() {
  return <span className="inline-block w-[15px] pl-[0.500px] font-['Noto_Sans_CJK_TC',sans-serif]">：</span>;
}

function Comma() {
  return <span className="inline-block w-[15px] pl-[3px]">，</span>;
}

function Logo() {
  return (
    <div className="flex w-[107px] items-end">
      <svg viewBox="0 0 42 32" className="h-[32px] w-[42px]">
        <path d="M.8 31 8.500 6l5 5.500L15.300 1l6 6.500L27 1l2.500 10L34.300 6 41 31" fill="none" stroke="#b52638" strokeWidth="1.800" />
        <path d="M.8 31 4 20M41 31l-3-10" stroke="#1f1d20" strokeWidth="2" />
        <path d="m6.800 31 7.500-23 7 11.500 7.500-11.500L36 31" fill="none" stroke="#1f1d20" strokeWidth="2" />
      </svg>
      <div className="ml-[1px] flex flex-col text-[#2b292d]">
        <div className="whitespace-nowrap text-[10.700px] font-medium leading-none">
          小码<span className="inline-block pl-[3.500px]">哥</span>
          <span className="inline-block pl-[4px]">教</span>
          <span className="inline-block pl-[4px]">育</span>
        </div>
        <div className="mt-[1px] whitespace-nowrap font-['Inter',sans-serif] text-[9.500px] font-extrabold leading-[9px] tracking-[2.300px]">
          SEEMYGO
        </div>
      </div>
    </div>
  );
}

function Handle({ className }: { className: string }) {
  return <div className={`absolute h-[7px] w-[7px] rounded-[1.500px] border border-[#98969b] bg-white ${className}`} />;
}

function SelectedBox() {
  return (
    <div className="relative ml-[23px] mt-[17.500px] h-[60px] w-[429px] shrink-0 border border-[#9c9a9f] pl-[7px] pt-[2.500px]">
      <div className="flex h-[17.600px] items-center">
        <div className="w-[19px]">
          <Bullet kind="gray" />
        </div>
        修改内存中的值
      </div>
      <div className="flex h-[17.600px] items-center whitespace-pre text-[#4c5567]">
        <div className="w-[19px]">
          <Bullet kind="hollow" />
        </div>
        <div className="flex h-[17.600px] w-[206px] items-center bg-[#b5bfd9]">
          <span className="w-[66px] text-[#b02053]">memory</span>
          <span className="w-[42px] text-[#b02053]">write</span>
          <span className="w-[66px]">内存地址</span>
          <span>数值</span>
        </div>
      </div>
      <div className="flex h-[17.600px] items-center whitespace-pre">
        <div className="w-[19px]">
          <Bullet kind="check" />
        </div>
        <div className="flex h-[16.500px] w-[108px] items-center bg-[#b5bfd9] text-[#4c5567]">
          <span className="w-[66px]">memory</span>
          <span>write</span>
        </div>
        <span className="w-[83px] tracking-[0.200px]">0x0000010</span>
        <span>10</span>
      </div>
      <Handle className="-left-[4px] -top-[4px]" />
      <Handle className="-top-[4px] left-[210px]" />
      <Handle className="-right-[4px] -top-[4px]" />
      <Handle className="-left-[4px] top-[25px]" />
      <Handle className="-right-[4px] top-[25px]" />
      <Handle className="-bottom-[4px] -left-[4px]" />
      <Handle className="-bottom-[4px] left-[210px]" />
      <Handle className="-bottom-[4px] -right-[4px]" />
      <svg viewBox="0 0 12 21" className="absolute -top-[24px] left-[207.500px] h-[21px] w-[12px]">
        <path d="M6 11v10" stroke="#9c9a9f" />
        <circle cx="6" cy="6" r="5" fill="#f2f2f3" stroke="#8b898e" />
        <path d="M8.200 4.300A2.700 2.700 0 1 0 8.600 7M8.700 2.700v2.200H6.500" fill="none" stroke="#6e6c71" />
      </svg>
      <svg viewBox="0 0 10 14" className="absolute left-[178px] top-[22px] h-[13px] w-[9px]">
        <path d="M1 .5v10.500l2.500-2.300 1.700 4.300 2-.8-1.700-4.200H9z" fill="#1b1b22" stroke="#dfe3ee" strokeWidth=".6" />
      </svg>
    </div>
  );
}

function Slide() {
  return (
    <div className="flex h-[481.500px] w-[856px] flex-col bg-[#fdfdfe] font-['Noto_Sans','Noto_Sans_CJK_SC',sans-serif] text-[14.200px] leading-none text-[#4a4a4c] shadow-[0_2px_9px_rgba(90,85,95,0.22)]">
      <Stripe />
      <div className="flex h-[75px] shrink-0 items-start border-b border-[#f0eff1] pl-[14px]">
        <div className="pt-[26.500px]">
          <Logo />
        </div>
        <div className="ml-[19px] flex h-[91px] items-center whitespace-nowrap text-[32.400px] font-bold text-[#373739]">
          常用<span className="text-[31.800px]">LLDB</span>指令
        </div>
      </div>
      <div className="flex shrink-0 flex-col pl-[31px] pt-[7.500px]">
        <Line kind="red">
          <R>print</R>、<R>p</R>
          <Colon />
          打印
        </Line>
        <div className="mb-[15px] mt-[19.500px]">
          <Line kind="red">
            <R>po</R>
            <Colon />
            打印对象
          </Line>
        </div>
        <div className="flex">
          <div className="flex w-[344px] flex-col">
            <Line kind="gray">读取内存</Line>
            <Line kind="hollow">
              <R w="w-[98.500px] tracking-[0.100px]">memory read/</R>
              <span className="font-bold text-[#2f76ad]">数量</span>
              <span className="font-bold text-[#bd1730]">格式</span>
              <span className="w-[51.500px] font-medium text-[#e9b935]">字节数</span>
              内存地址
            </Line>
            <Line kind="hollow">
              <R w="w-[13.500px]">x/</R>
              <span className="font-bold text-[#2f76ad]">数量</span>
              <span className="font-bold text-[#bd1730]">格式</span>
              <span className="w-[51.500px] font-medium text-[#e9b935]">字节数</span>
              内存地址
            </Line>
            <Line kind="check">
              <span className="w-[48.500px]">x/3xw</span>
              <span className="tracking-[0.200px]">0x10010</span>
            </Line>
          </div>
          <div className="flex flex-col">
            <Line kind="gray">格式</Line>
            <Line kind="hollow">
              <R>x</R>是16进制
              <Comma />
              <R>f</R>是浮点
              <Comma />
              <R>d</R>是10进制
            </Line>
            <div className="h-[19.500px]" />
            <Line kind="gray">字节大小</Line>
            <Line kind="hollow">
              <R>b</R>
              <Colon />
              <span className="tracking-[0.100px]">byte 1字节</span>
              <Comma />
              <R>h</R>
              <Colon />
              <span className="tracking-[0.100px]">half word 2字节</span>
            </Line>
            <Line kind="hollow">
              <R>w</R>
              <Colon />
              <span className="tracking-[0.100px]">word 4字节</span>
              <Comma />
              <R>g</R>
              <Colon />
              <span className="tracking-[0.100px]">giant word 8字节</span>
            </Line>
          </div>
        </div>
      </div>
      <SelectedBox />
      <div className="flex-1" />
      <Stripe />
    </div>
  );
}

function Canvas() {
  return (
    <div className="relative flex flex-1 flex-col border-b-[3px] border-[#f3f2f4] bg-linear-to-b from-[#f8f6fa] via-[#efeef1] to-[#e5e4e6] pl-[91px] pt-[34px]">
      <Slide />
      <svg viewBox="0 0 24 46" className="absolute right-0 top-[68px] h-[46px] w-[24px]">
        <path d="M24 1.500H6c-3 0-4.500 1.500-4.500 4.500v22c0 2 1 3 2.500 4L24 43" fill="#fbfafc" stroke="#b9b7bc" strokeWidth="1.300" />
        <rect x="5" y="7" width="15.500" height="18.500" rx="2" fill="#2467c4" />
        <circle cx="12.500" cy="16" r="6" fill="#e9f1fb" />
        <path d="m7.500 16 3-2.500v1.700h4v-1.700l3 2.500-3 2.500v-1.700h-4v1.700z" fill="#1d59b3" />
      </svg>
    </div>
  );
}

/* ---------- status bar ---------- */

function StatusBar() {
  return (
    <div className="flex h-[20px] shrink-0 items-center rounded-b-[5px] border-t border-[#b9b7bb] bg-linear-to-b from-[#e0dfe1] to-[#c9c8ca] text-[10px] leading-none text-[#55535a]">
      <div className="ml-[20px] w-[84px] whitespace-nowrap tracking-[0.100px]">幻灯片 10 / 28</div>
      <div className="whitespace-nowrap">中文(中国)</div>
      <svg viewBox="0 0 11 10" className="ml-auto h-[10px] w-[11px]">
        <path d="m5.500 0 2.500 3H3zM0 4.500h11M0 7h11M2 9.500h7" stroke="#6a686d" fill="#6a686d" strokeWidth="1" />
      </svg>
      <div className="ml-[4px] w-[36px]">备注</div>
      <svg viewBox="0 0 12 10" className="h-[9px] w-[11px]">
        <path d="M0 0h12v7H5.500L3 10V7H0z" fill="#5b595e" />
      </svg>
      <div className="ml-[4px] w-[30px]">批注</div>
      <div className="flex h-[19px] w-[30px] items-center justify-center bg-[#929094]">
        <svg viewBox="0 0 13 11" className="h-[11px] w-[13px]">
          <g fill="none" stroke="#f6f5f7" strokeWidth="1.200">
            <path d="M.6.6h11.800v9.800H.6zM3.800.6v9.800M6 3h4.500v3H6zM6 8.300h4.500" />
          </g>
        </svg>
      </div>
      <svg viewBox="0 0 13 10" className="ml-[8px] h-[10px] w-[13px]">
        <path d="M0 0h5.500v4H0zM7.500 0H13v4H7.500zM0 6h5.500v4H0zM7.500 6H13v4H7.500z" fill="#66646a" />
      </svg>
      <svg viewBox="0 0 13 11" className="ml-[17px] h-[11px] w-[12px]">
        <path d="M0 .8h13M1.500 1v5.500h10V1M4 3.500h5M6.500 6.500v3M4 10h5" fill="none" stroke="#66646a" strokeWidth="1.300" />
      </svg>
      <div className="ml-[15px] h-[2px] w-[7px] bg-[#66646a]" />
      <div className="relative ml-[6px] h-[2px] w-[83px] bg-[#8d8b90]">
        <div className="absolute -top-[4px] left-[37px] h-[10px] w-[10px] rounded-full bg-white shadow-[0_0_1px_#66646a]" />
      </div>
      <svg viewBox="0 0 8 8" className="ml-[6px] h-[7px] w-[7px]">
        <path d="M0 4h8M4 0v8" stroke="#66646a" strokeWidth="1.800" />
      </svg>
      <div className="ml-[14px] w-[41px] text-[10px]">107%</div>
      <svg viewBox="0 0 12 12" className="mr-[20px] h-[11px] w-[11px]">
        <g fill="none" stroke="#66646a">
          <rect x=".5" y=".5" width="11" height="11" />
          <path d="m2.500 2.500 2 2M9.500 2.500l-2 2M2.500 9.500l2-2M9.500 9.500l-2-2" strokeWidth="1.500" />
        </g>
      </svg>
    </div>
  );
}

/* ---------- window behind ---------- */

function BackWindow() {
  return (
    <div className="flex h-[12px] w-[1198px] shrink-0 items-start overflow-hidden rounded-b-[6px] bg-linear-to-b from-[#858386] to-[#a9a6a8] text-[8.500px] leading-none text-[#3c3a3d]">
      <svg viewBox="0 0 10 10" className="-mt-[3px] ml-[16px] h-[10px] w-[10px]">
        <circle cx="5" cy="5" r="4.300" fill="none" stroke="#59575b" />
        <path d="M3 4h4L5 7z" fill="#59575b" />
      </svg>
      <div className="ml-[6px] w-[148px] text-[#77757a]">Filter</div>
      <svg viewBox="0 0 42 8" className="ml-[2px] h-[8px] w-[42px]">
        <path d="M1 6.500h10M3.500 1.500l2.500 3.500 2.500-3.500" stroke="#4b79b9" fill="none" strokeWidth="1.400" />
        <path d="M15 0v6.500h10V0M18 2v4M22 2v4" stroke="#59575b" fill="none" />
        <rect x="29" y="0" width="11" height="7" fill="#7d9dcb" stroke="#4b79b9" />
      </svg>
      <div className="ml-[9px] h-[13px] w-px bg-[#716f73]" />
      <div className="ml-[8px] flex w-[722px] items-center text-[9px] font-medium">
        All Output
        <svg viewBox="0 0 6 9" className="ml-[3px] h-[8px] w-[5px]">
          <path d="M.5 3.500 3 .8l2.500 2.700M.5 5.500 3 8.200l2.500-2.700" fill="none" stroke="#3c3a3d" />
        </svg>
      </div>
      <svg viewBox="0 0 10 10" className="-mt-[3px] h-[10px] w-[10px]">
        <circle cx="5" cy="5" r="4.300" fill="none" stroke="#59575b" />
        <path d="M3 4h4L5 7z" fill="#59575b" />
      </svg>
      <div className="ml-[6px] text-[#77757a]">Filter</div>
      <svg viewBox="0 0 56 9" className="ml-auto mr-[18px] h-[8px] w-[56px]">
        <path d="M1 0v7h7V0M3.500 0v5M6 0v5M16 0v8" stroke="#59575b" fill="none" />
        <path d="M21 0v7h11V0M24 0v7" stroke="#4b494d" fill="none" strokeWidth="1.200" />
        <path d="M37 0v7h11V0M44 0v7" stroke="#4b79b9" fill="none" strokeWidth="1.200" />
        <path d="M54 0v7" stroke="#2b292d" strokeWidth="2" />
      </svg>
    </div>
  );
}

/* ---------- dock ---------- */

function I({ children }: { children: ReactNode }) {
  return (
    <svg viewBox="0 0 26 26" className="h-[25px] w-[25px]">
      {children}
    </svg>
  );
}

const DOCK: { name: string; running?: boolean; icon: ReactNode }[] = [
  {
    name: "finder",
    running: true,
    icon: (
      <I>
        <rect x="1" y="2" width="24" height="22" rx="2" fill="#e9f1f8" />
        <path d="M3 2h12c-2 4-3 8-3 12h3c0 4 .5 7 1.200 10H3c-1.500 0-2-.5-2-2V4c0-1.500.5-2 2-2z" fill="#2f86e3" />
        <path d="M7.500 7.500v3M18.500 7.500v3M5.500 17c4 4 11 4 15 0" stroke="#1d2b3f" strokeWidth="1.300" fill="none" />
      </I>
    ),
  },
  {
    name: "terminal",
    icon: (
      <I>
        <rect x="1.500" y="3" width="23" height="20" rx="1" fill="#1f2322" stroke="#4b5352" />
        <text x="3" y="10" fontSize="7.500" fontWeight="700" fill="#46d13c">
          $8
        </text>
      </I>
    ),
  },
  {
    name: "xcode",
    running: true,
    icon: (
      <I>
        <path d="m0 7 19-4 6 16-21 5z" fill="#4d9de8" />
        <path d="m5 19 8-11 6 11M6 16h13" stroke="#a4d1f8" strokeWidth="1.400" fill="none" />
        <path d="m14 24 6-18" stroke="#3f3d41" strokeWidth="3.200" />
        <path d="M15 1.500h7l4 4-3 .5-2.500-1.500L15 4z" fill="#d8d7da" stroke="#6d6b70" strokeWidth=".6" />
      </I>
    ),
  },
  {
    name: "simulator",
    icon: (
      <I>
        <path d="m0 7 19-4 6 15-21 6z" fill="#4897e6" />
        <path d="m6 18 7-9 6 10M5 15l14-2" stroke="#9cccf7" strokeWidth="1.300" fill="none" />
        <path d="m17 10 8-1 1 14-8 2z" fill="#232529" />
        <path d="m18.500 12 5.500-.7.700 9.500-5.500 1.200z" fill="#3c4046" />
      </I>
    ),
  },
  {
    name: "sublime",
    icon: (
      <I>
        <rect x="1" y="2" width="24" height="22" rx="3" fill="#8d8e90" />
        <rect x="2" y="2" width="22" height="17" rx="2" fill="#4f4f50" />
        <path d="M17 5.500 10 7v3.500l6.500 1.700v3.300L9.500 17" fill="none" stroke="#f09a34" strokeWidth="2.600" />
      </I>
    ),
  },
  {
    name: "typora",
    icon: (
      <I>
        <path d="m1 3 22-2 2 22-22 2z" fill="#f5f5f3" stroke="#c9d3d2" strokeWidth=".6" />
        <text x="7.500" y="19" fontSize="16" fill="#36383a" fontFamily="Liberation Serif, serif">
          T
        </text>
      </I>
    ),
  },
  {
    name: "fun",
    icon: (
      <I>
        <path d="M5 3h16l4 12v7c0 1.500-1 2-2 2H3c-1 0-2-.5-2-2v-7z" fill="#dcdfe1" stroke="#85898b" strokeWidth=".7" />
        <path d="M1.500 19h23v4h-23z" fill="#8d9193" />
        <text x="3" y="15" fontSize="10" fontWeight="700" fill="#4a4e52" fontFamily="Liberation Serif, serif" textLength="20">
          FUN
        </text>
      </I>
    ),
  },
  {
    name: "pp",
    icon: (
      <I>
        <rect x="0" y="0" width="26" height="26" rx="4" fill="#4795ee" />
        <path d="M8.500 22V12a6 6 0 1 1 6 5.500h-1" fill="none" stroke="#fff" strokeWidth="4" strokeLinecap="round" />
      </I>
    ),
  },
  {
    name: "crystal",
    icon: (
      <I>
        <path d="m0 8 7 1 6-8 5 9 7-5-2 14-4 6-7 1-9-4z" fill="#f6f3ee" />
        <path d="m0 8 5 4 3 13-5-4z" fill="#e2574a" />
        <path d="m8 14 5-2 5 6 7-10-2 12-4 5-7 1-4-3z" fill="#f5b93b" />
        <path d="m18 18 7-10-2 12-4 5-6 1z" fill="#e9962c" />
      </I>
    ),
  },
  {
    name: "designer",
    icon: (
      <I>
        <path d="m2 3 19-2 3 20-18 3z" fill="#63a9ea" />
        <path d="m7 18 5-12 8 11M8 13l10-1" stroke="#d6eafb" strokeWidth="1.600" fill="none" />
        <path d="m3 16 7 6-2 3-5-2z" fill="#3c434c" />
      </I>
    ),
  },
  {
    name: "portrait",
    icon: (
      <I>
        <path d="M2 8C3 0 16-2 18 5c4-2 8 0 8 4s-3 7-6 5l2 6H4z" fill="#1e1614" />
        <path d="M4.500 8c2-4 8-4 9 0 1 5 0 10-3.500 11S3.500 13 4.500 8z" fill="#dfae8f" />
        <path d="M3 25c0-5 5-7 9-6 6-1 11 1 12 6z" fill="#b5382c" />
        <circle cx="13" cy="22" r="2.500" fill="#ecd2c3" />
        <path d="M7 15h4" stroke="#b3302a" strokeWidth="1.400" />
      </I>
    ),
  },
  {
    name: "apple",
    icon: (
      <I>
        <path d="M12 7c-6-4-12 1-11 8s6 11 11 9c6 2 9-1 10-5l-3-1 5-3-5-2 5-3-4-1 1-3c-3-2-6-1-9 1z" fill="#bd3f25" />
        <path d="M3 10c2-2 5-2 6 0s-2 5-4 5-3-3-2-5z" fill="#e67350" />
        <path d="M12 7c0-3 1-5 3-6.500 1 2 0 5-3 6.500z" fill="#5b4420" />
      </I>
    ),
  },
  {
    name: "ultraedit",
    icon: (
      <I>
        <circle cx="13" cy="13" r="12.500" fill="#2c2a22" />
        <circle cx="13" cy="13" r="11" fill="#dfb433" />
        <text x="4.500" y="15.500" fontSize="12" fontWeight="800" fill="#25231d">
          U
        </text>
        <text x="13" y="20.500" fontSize="12" fontWeight="800" fill="#25231d">
          E
        </text>
      </I>
    ),
  },
  {
    name: "photoshop",
    icon: (
      <I>
        <rect x="1" y="1" width="24" height="24" fill="#0c2238" stroke="#3f7ca5" />
        <text x="5" y="18" fontSize="13" fontWeight="500" fill="#7fd0f5">
          Ps
        </text>
      </I>
    ),
  },
  {
    name: "github",
    icon: (
      <I>
        <circle cx="13" cy="13" r="12.500" fill="#e9dfec" />
        <circle cx="13" cy="13" r="11" fill="#7c2a83" />
        <path
          d="M6 6l4 1.500c2-.5 4-.5 6 0L20 6l.5 4c1.500 2 1.500 7-4 8.500v6h-6V22c-3 .5-3-2-5-3 2-.5 3 1.500 5 1v-1.500C4.500 17 4.500 12 6 10z"
          fill="#f2ecf3"
        />
      </I>
    ),
  },
  {
    name: "swirl",
    icon: (
      <I>
        <circle cx="13" cy="13" r="12" fill="#4a92dd" />
        <path d="M13 1c7 0 12 5 12 11-5-6-10-6-14-4-3 2-4 6-2 9C4 15 2 12 2 9c2-5 6-8 11-8z" fill="#a3cff4" />
        <circle cx="13.500" cy="12.500" r="4.500" fill="#5ba4b9" />
        <path d="M18 14c0 5-6 7-10 5" stroke="#2767b4" strokeWidth="2.500" fill="none" />
      </I>
    ),
  },
  {
    name: "penguin",
    icon: (
      <I>
        <path d="M13 0c5 0 7 4 7 8 0 3 3 6 3.500 10-1 2-2 0-3 0 0 3-1 4-2 5H7.500c-1-1-2-2-2-5-1 0-2 2-3 0C3 14 6 11 6 8c0-4 2-8 7-8z" fill="#17171a" />
        <ellipse cx="13" cy="18" rx="5.500" ry="6" fill="#fbfbfb" />
        <path d="M5.500 11c5 3 10 3 15 0l.5 3c-5 2.500-9 3-12 2.500l-.5 4H6l.5-5z" fill="#d8281f" />
        <ellipse cx="10.700" cy="5.500" rx="1.600" ry="2.200" fill="#fff" />
        <ellipse cx="15.300" cy="5.500" rx="1.600" ry="2.200" fill="#fff" />
        <path d="M8.500 9c3-1.500 6-1.500 9 0-3 2-6 2-9 0zM6 24.500c2-2 5-2 6.500 0zM13.500 24.500c2-2 5-2 6.500 0z" fill="#f2a52b" />
      </I>
    ),
  },
  {
    name: "wechat",
    icon: (
      <I>
        <path d="M9.500 3C4 3 .5 6.500.5 10.500c0 2.500 1.300 4.500 3.300 5.800L3 19l3.300-1.700c5 1.200 12.200-1.300 12.200-6.800C18.500 6.500 15 3 9.500 3z" fill="#64c630" />
        <path d="M18 11c-4.500 0-7.500 2.800-7.500 6.200s4 6.600 9.500 5.800l2.800 1.500-.6-2.500c6-4 2.500-11-4.200-11z" fill="#eef1ee" />
        <circle cx="6.500" cy="8.500" r="1.200" fill="#2a6414" />
        <circle cx="12.500" cy="8.500" r="1.200" fill="#2a6414" />
        <circle cx="15.500" cy="15.500" r="1" fill="#7b8c7b" />
        <circle cx="20.500" cy="15.500" r="1" fill="#7b8c7b" />
      </I>
    ),
  },
  {
    name: "g",
    icon: (
      <I>
        <path d="m.5 5 20-4.500L25.500 20 5 25.500z" fill="#c0282b" />
        <path d="M18 6.500 10.500 8c-3 1-3.500 4-2.500 7s3 4.500 5.500 3.500l4-1.500-.8-4.500-4 .8" stroke="#f9eceb" strokeWidth="2.500" fill="none" />
      </I>
    ),
  },
  {
    name: "cloud",
    icon: (
      <I>
        <rect x="1" y="1" width="24" height="24" rx="4" fill="#f8fafc" />
        <g fill="none" stroke="#3569c4" strokeWidth="2.400">
          <circle cx="13" cy="9" r="4" />
          <circle cx="8.500" cy="15.500" r="3.500" />
          <circle cx="17.500" cy="15.500" r="3.500" />
        </g>
        <path d="M9 23.500h4" stroke="#d83a3a" strokeWidth="2" />
        <path d="M13 23.500h4" stroke="#3569c4" strokeWidth="2" />
      </I>
    ),
  },
  {
    name: "bird",
    icon: (
      <I>
        <rect x="1" y="1" width="24" height="24" rx="4" fill="#f3f8fc" />
        <path d="m6 3 9 8c.5-2 2.500-3.500 4.500-3l4 .5-3 2.500c0 6-3 9-7 10l-5 2 2.500-4C7 19 4 17 3 14l7 1.500C7 13 5 8 6 3z" fill="#3c82dc" />
      </I>
    ),
  },
  {
    name: "chrome",
    icon: (
      <I>
        <circle cx="13" cy="13" r="12" fill="#e5463a" />
        <path d="M2.600 7 8 16l5 3-3 5.600A12 12 0 0 1 2.600 7z" fill="#3fa353" />
        <path d="M13 7.500h10.700A12 12 0 0 1 10.500 24.700l7.500-9z" fill="#f5c73b" />
        <circle cx="13" cy="13" r="5.700" fill="#f6f7f8" />
        <circle cx="13" cy="13" r="4.500" fill="#4683ea" />
      </I>
    ),
  },
  {
    name: "excel",
    running: true,
    icon: (
      <I>
        <rect x="12" y="4" width="13.500" height="19" fill="#f5f8f6" />
        <path d="M15 7h4M21 7h3M15 10h4M21 10h3M15 13h4M21 13h3M15 16h4M21 16h3M15 19h4M21 19h3" stroke="#4b5b52" strokeWidth="1.500" />
        <path d="M0 4 15 1v25L0 22.500z" fill="#20734a" />
        <path d="m4.500 9 5.500 8.500M10 9l-5.500 8.500" stroke="#fff" strokeWidth="1.700" />
      </I>
    ),
  },
  {
    name: "word",
    icon: (
      <I>
        <rect x="12" y="4" width="13.500" height="19" fill="#f5f6fa" />
        <path d="M16 8h8M16 11h8M16 14h8M16 17h8M16 20h8" stroke="#54606f" strokeWidth="1.300" />
        <path d="M0 4 15 1v25L0 22.500z" fill="#2a589f" />
        <path d="m3 9.500 2 7.500 2.500-6.500L10 17l2-7.500" stroke="#fff" strokeWidth="1.600" fill="none" />
      </I>
    ),
  },
  {
    name: "powerpoint",
    running: true,
    icon: (
      <I>
        <rect x="12" y="4" width="13.500" height="19" fill="#f9f5f4" />
        <circle cx="20" cy="10" r="3.500" fill="#2e2b2c" />
        <path d="M20 10V6.500a3.500 3.500 0 0 1 3.500 3.500z" fill="#d24a2e" />
        <path d="M16.500 16.500h7M16.500 19.500h7" stroke="#54484a" strokeWidth="1.300" />
        <path d="M0 4 15 1v25L0 22.500z" fill="#cb4427" />
        <path d="M5.500 18V9h3c3.500 0 3.500 5 0 5h-3" stroke="#fff" strokeWidth="1.700" fill="none" />
      </I>
    ),
  },
  {
    name: "note",
    icon: (
      <I>
        <rect x="1" y="1" width="24" height="24" rx="6" fill="#4f9cf1" />
        <path d="m7 19 1-7c1-1 3-1 5-4l2-1.500 5 4.500-2 3c-2 1-2 3-4 4z" fill="#fff" />
      </I>
    ),
  },
  {
    name: "webstorm",
    icon: (
      <I>
        <path d="m1.500 3 3.500 18 4-13 3.500 13 2.500-18" stroke="#2d8fb6" strokeWidth="4" fill="none" />
        <path d="M25 3.500c-5-1-8 1-7 4.500s7 5 6 9.500-5 6-8 4.500" stroke="#e98a36" strokeWidth="3.500" fill="none" />
      </I>
    ),
  },
  {
    name: "stickies",
    icon: (
      <I>
        <path d="m2 3 20-2 2 22-19 2.500z" fill="#fbfbf6" stroke="#d5d9cf" strokeWidth=".5" />
        <path d="m2 3 20-2 .4 4.500L2.600 7.700z" fill="#f0c730" />
      </I>
    ),
  },
  {
    name: "teamviewer",
    running: true,
    icon: (
      <I>
        <path d="M3 1h17l4 3v19l-4 2.500-17-3z" fill="#1f5fc0" />
        <path d="M20 1.500 24 4v19l-4 2.500z" fill="#123f8c" />
        <circle cx="11.500" cy="13" r="8" fill="#f0f5fb" />
        <path d="m4.500 13 4-3.300v2.200h6V9.700l4 3.300-4 3.300v-2.200h-6v2.200z" fill="#1d5ebd" />
      </I>
    ),
  },
  {
    name: "quicktime",
    icon: (
      <I>
        <circle cx="13" cy="13" r="12" fill="#363b45" />
        <circle cx="13" cy="13" r="7" fill="none" stroke="#3e9bf0" strokeWidth="3.500" />
        <path d="m14.500 14 9.500 10.500h-6.500l-4.500-7z" fill="#2a4f88" />
      </I>
    ),
  },
  {
    name: "vlc",
    icon: (
      <I>
        <path d="M12 0h2.500l5 19H7z" fill="#ef8425" />
        <path d="M10.500 6h5.500l1.100 4H9.500zM8.500 13.500h9.500l.8 3.500H7.500z" fill="#f5f1ec" />
        <path d="M3.500 18h19l3 7h-25z" fill="#e97719" />
        <path d="M6.500 18c2 2.500 11 2.500 13 0l-.5-1.500h-12z" fill="#f39a45" />
      </I>
    ),
  },
  {
    name: "reel",
    running: true,
    icon: (
      <I>
        <circle cx="13" cy="13" r="12.500" fill="#d5d7da" />
        <g fill="#2b2d33">
          <circle cx="13" cy="5.500" r="3" />
          <circle cx="6" cy="9.500" r="2.800" />
          <circle cx="20" cy="9.500" r="2.800" />
          <circle cx="6.500" cy="17" r="2.800" />
          <circle cx="13" cy="13" r="1.500" />
        </g>
        <path d="m3 21 22-9.500v5L7 24z" fill="#7d4ea8" />
        <path d="m5.500 22.800 19.500-8.500" stroke="#4cae7f" strokeWidth="1.300" />
      </I>
    ),
  },
  {
    name: "music",
    icon: (
      <I>
        <rect x="1" y="1" width="24" height="24" rx="5" fill="#e23a2c" />
        <path d="M17.500 5c-3-1.500-4 1-3.500 3l1.500 6c.5 3-4.500 3.500-4.500.5 0-4 8-5 9 .5.700 8-13 9-13.500 0C6.500 10 9 8 11.500 7.500" fill="none" stroke="#fff" strokeWidth="1.900" strokeLinecap="round" />
      </I>
    ),
  },
  {
    name: "speaker",
    icon: (
      <I>
        <circle cx="13" cy="13" r="12.500" fill="#c3c5c7" />
        <circle cx="13" cy="13" r="11" fill="#221f1d" />
        <circle cx="13" cy="13" r="7" fill="none" stroke="#e59b37" strokeWidth="3.500" />
        <circle cx="13" cy="13" r="2.500" fill="#9c6424" />
      </I>
    ),
  },
  {
    name: "vmware",
    running: true,
    icon: (
      <I>
        <path d="M2.500 4.500h14v12h-14z" fill="none" stroke="#2f6fb4" strokeWidth="4" />
        <path d="M10.500 11.500h13v12h-13z" fill="none" stroke="#cf3a31" strokeWidth="4" />
        <path d="m7 9 9 9M16 12.500V18h-5.500" stroke="#93b9df" strokeWidth="2" fill="none" />
      </I>
    ),
  },
  {
    name: "settings",
    icon: (
      <I>
        <rect x="1" y="1.500" width="24" height="23" fill="#9ea2a5" />
        <circle cx="13" cy="13" r="10.500" fill="#3a3c3f" />
        <circle cx="13" cy="13" r="8" fill="none" stroke="#bfc2c5" strokeWidth="1.800" />
        <path d="M13 13V5.500M13 13l-6.500 4M13 13l6.500 4" stroke="#bfc2c5" strokeWidth="1.500" />
        <circle cx="13" cy="13" r="2.500" fill="#bfc2c5" />
      </I>
    ),
  },
];

function Dock() {
  return (
    <div className="flex h-[37px] w-[1154px] shrink-0 bg-[#469a9e] pl-[2.500px]">
      {DOCK.map((d) => (
        <div key={d.name} className="flex h-[37px] w-[29.920px] shrink-0 flex-col items-center pt-[5px]">
          {d.icon}
          {d.running && <div className="mt-[3px] h-[3px] w-[3px] rounded-full bg-[#0b2324]" />}
        </div>
      ))}
      <div className="ml-[5px] mt-[5px] h-[26px] w-px bg-[#2f7c80]" />
      <svg viewBox="0 0 26 26" className="ml-[8px] mt-[4px] h-[26px] w-[26px]">
        <path d="M6 0h12v8H6z" fill="#f1f4f5" />
        <path d="M8 2h5v2.500H8z" fill="#4a5558" />
        <path d="M1 5h8l2 2h14v17c0 1-.5 1.500-1.500 1.500h-21C1.500 25.500 1 25 1 24z" fill="#6fc3ea" />
        <path d="M1 9h24" stroke="#9bd8f3" strokeWidth="1.500" />
      </svg>
      <svg viewBox="0 0 26 26" className="ml-[4px] mt-[5px] h-[26px] w-[26px]">
        <path d="M3.500 2h19L19.500 25h-13z" fill="#dfe7e9" stroke="#b9cdd0" strokeWidth=".7" />
        <ellipse cx="13" cy="2.800" rx="9.700" ry="2" fill="#f6f9f9" stroke="#b2c5c8" strokeWidth=".6" />
      </svg>
    </div>
  );
}

/* ---------- page ---------- */

export default function App() {
  return (
    <div className="flex h-[750px] w-[1334px] overflow-hidden bg-black px-[67px] pt-px font-['Inter','Noto_Sans_CJK_SC',sans-serif]">
      <div className="flex w-[1200px] flex-col overflow-hidden bg-[#17797b]">
        <MenuBar />
        <div className="flex h-[5px] shrink-0 bg-[#3d897e] pl-[7px] pt-px">
          <div className="h-[4px] w-[1167px] rounded-t-[4px] bg-[#dfe5e5]" />
        </div>
        <div className="flex h-[676px] shrink-0">
          <div className="flex w-[4px] shrink-0 flex-col bg-[#9b999c]">
            <div className="h-[36px] bg-[#3d897e]" />
          </div>
          <div className="flex w-[1196px] flex-col bg-[#858386]">
            <div className="h-[42px] shrink-0 rounded-tl-[5px] bg-linear-to-b from-[#b75037] to-[#ab412a]">
              <TitleBar />
              <Tabs />
            </div>
            <Ribbon />
            <div className="flex h-[555px] shrink-0">
              <ThumbPane />
              <Canvas />
            </div>
            <StatusBar />
          </div>
        </div>
        <BackWindow />
        <div className="flex pl-[23px]">
          <Dock />
        </div>
      </div>
    </div>
  );
}
